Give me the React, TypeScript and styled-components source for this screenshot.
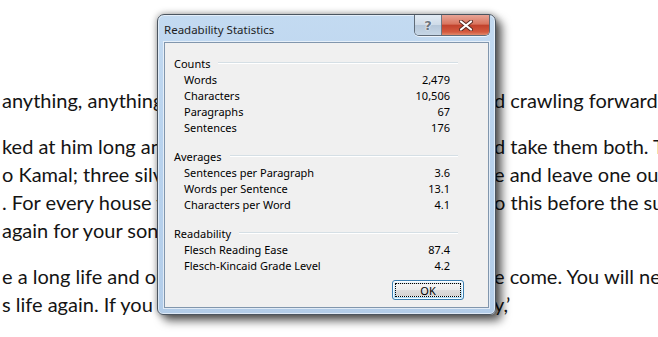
import styled, { createGlobalStyle } from 'styled-components';

const GlobalStyle = createGlobalStyle`
  html, body {
    margin: 0;
    padding: 0;
    background: #fff;
    overflow: hidden;
  }
`;

type DocLine = { left: string; right?: string };

const paragraphs: DocLine[][] = [
    [
        {left: 'anything, anything at all, he begged, and went on his knees an', right: 'd crawling forward'},
    ],
    [
        {left: 'ked at him long and hard, then said that he would take them both an', right: 'd take them both. Then'},
        {left: 'o Kamal; three silver coins for the old woman and her house, one for the stov', right: 'e and leave one out'},
        {left: '. For every house you burn, you will pay twice. Do it, and do it all, d', right: 'o this before the sun'},
        {left: 'again for your son.'},
    ],
    [
        {left: 'e a long life and one of plenty, for as long as the seasons turn and th', right: 'e come. You will never'},
        {left: 's life again. If you keep your promise, nothing bad will happen to you, the boy sa', right: 'y,\u2019'},
    ],
];

type Stat = { label: string; value: string };

const groups: { title: string; rows: Stat[] }[] = [
    {
        title: 'Counts',
        rows: [
            {label: 'Words', value: '2,479'},
            {label: 'Characters', value: '10,506'},
            {label: 'Paragraphs', value: '67'},
            {label: 'Sentences', value: '176'},
        ],
    },
    {
        title: 'Averages',
        rows: [
            {label: 'Sentences per Paragraph', value: '3.6'},
            {label: 'Words per Sentence', value: '13.1'},
            {label: 'Characters per Word', value: '4.1'},
        ],
    },
    {
        title: 'Readability',
        rows: [
            {label: 'Flesch Reading Ease', value: '87.4'},
            {label: 'Flesch-Kincaid Grade Level', value: '4.2'},
        ],
    },
];

const App = () => {
    return (
        <Page>
            <GlobalStyle/>
            <Document>
                {paragraphs.map((lines, i) => (
                    <Paragraph key={i}>
                        {lines.map((line, j) => (
                            <Line key={j}>
                                <LeftText>{line.left}</LeftText>
                                <RightText>{line.right}</RightText>
                            </Line>
                        ))}
                    </Paragraph>
                ))}
            </Document>

            <Dialog>
                <TitleBar>
                    <Title>Readability Statistics</Title>
                    <Caption>
                        <HelpButton>?</HelpButton>
                        <CloseButton>
                            <svg width="14" height="11" viewBox="0 0 14 11">
                                <path d="M2 1.5 L12 9.5 M12 1.5 L2 9.5" stroke="#5a2a22" strokeWidth="4"
                                      strokeLinecap="round"/>
                                <path d="M2 1.5 L12 9.5 M12 1.5 L2 9.5" stroke="#fff" strokeWidth="2.2"
                                      strokeLinecap="round"/>
                            </svg>
                        </CloseButton>
                    </Caption>
                </TitleBar>
                <Client>
                    {groups.map(group => (
                        <Group key={group.title}>
                            <GroupTitle>
                                <span>{group.title}</span>
                                <Rule/>
                            </GroupTitle>
                            {group.rows.map(row => (
                                <Row key={row.label}>
                                    <span>{row.label}</span>
                                    <Value>{row.value}</Value>
                                </Row>
                            ))}
                        </Group>
                    ))}
                    <Footer>
                        <OkButton><Focus>OK</Focus></OkButton>
                    </Footer>
                </Client>
            </Dialog>
        </Page>
    )
};

const Page = styled.div`
  position: relative;
  width: 658px;
  height: 337px;
  overflow: hidden;
  background: #fff;
`;

const Document = styled.div`
  padding-top: 86px;
  font-family: Lato, "Liberation Sans", sans-serif;
  font-size: 20px;
  color: #141414;
`;

const Paragraph = styled.div`
  margin-bottom: 18px;
`;

const Line = styled.div`
  display: grid;
  grid-template-columns: 494px 1fr;
  height: 28px;
  line-height: 28px;
  white-space: nowrap;
`;

const LeftText = styled.span`
  overflow: hidden;
  padding-left: 2px;
`;

const RightText = styled.span`
  overflow: hidden;
`;

const Dialog = styled.div`
  position: absolute;
  left: 157px;
  top: 14px;
  width: 339px;
  height: 301px;
  box-sizing: border-box;
  display: flex;
  flex-direction: column;
  border: 1px solid #4b5560;
  border-radius: 7px 7px 6px 6px;
  background: linear-gradient(to bottom, #c3daf1 0%, #b9d3ee 40%, #b3cde9 100%);
  box-shadow: inset 0 0 0 1px rgba(255, 255, 255, 0.55),
  6px 6px 10px rgba(0, 0, 0, 0.6),
  0 0 7px rgba(0, 0, 0, 0.4);
  font-family: "Noto Sans", "Open Sans", sans-serif;
  font-size: 11px;
  color: #000;
`;

const TitleBar = styled.div`
  display: flex;
  align-items: flex-start;
  justify-content: space-between;
  height: 28px;
  padding: 0 5px 0 6px;
`;

const Title = styled.div`
  padding-top: 7px;
  font-size: 11.5px;
  color: #1e1e1e;
`;

const Caption = styled.div`
  display: flex;
  height: 20px;
  border: 1px solid #5f6b78;
  border-top: none;
  border-radius: 0 0 5px 5px;
  overflow: hidden;
  box-shadow: 0 1px 0 rgba(255, 255, 255, 0.7);
`;

const HelpButton = styled.div`
  width: 26px;
  display: flex;
  align-items: center;
  justify-content: center;
  border-right: 1px solid #6d7884;
  background: linear-gradient(to bottom, #e2ebf4 0%, #cfdbe8 48%, #b6c7d9 52%, #c6d6e6 100%);
  font-family: "DejaVu Sans", sans-serif;
  font-size: 13px;
  font-weight: bold;
  color: #6c7580;
  text-shadow: 0 0 2px #fff, 0 0 1px #fff;
`;

const CloseButton = styled.div`
  width: 47px;
  display: flex;
  align-items: center;
  justify-content: center;
  background: linear-gradient(to bottom, #e8a597 0%, #d9755f 45%, #c2432d 52%, #d45a3f 85%, #e08a6c 100%);
`;

const Client = styled.div`
  flex: 1;
  margin: 0 6px 6px;
  padding: 12px 0 7px;
  border: 1px solid #8196ad;
  background: #f0f0f0;
  box-shadow: 0 0 0 1px rgba(255, 255, 255, 0.6);
  display: flex;
  flex-direction: column;
`;

const Group = styled.div`
  display: flex;
  flex-direction: column;
  margin-bottom: 13px;

  &:nth-last-child(2) {
    margin-bottom: 7px;
  }
`;

const GroupTitle = styled.div`
  display: flex;
  align-items: center;
  height: 16px;
  padding: 0 30px 0 9px;
  gap: 8px;
`;

const Rule = styled.div`
  flex: 1;
  height: 1px;
  background: #d5dfe5;
  border-bottom: 1px solid #fff;
`;

const Row = styled.div`
  display: flex;
  align-items: center;
  justify-content: space-between;
  height: 16px;
  padding: 0 38px 0 19px;
`;

const Value = styled.span`
  text-align: right;
`;

const Footer = styled.div`
  display: flex;
  justify-content: flex-end;
  padding-right: 24px;
`;

const OkButton = styled.div`
  width: 72px;
  height: 20px;
  box-sizing: border-box;
  padding: 2px;
  border: 1px solid #3c7fb1;
  border-radius: 3px;
  background: linear-gradient(to bottom, #eaf6fd 0%, #d9f0fc 45%, #bee6fd 50%, #a7d9f5 100%);
  box-shadow: inset 0 0 0 1px rgba(255, 255, 255, 0.8);
`;

const Focus = styled.div`
  height: 100%;
  box-sizing: border-box;
  display: flex;
  align-items: center;
  justify-content: center;
  border: 1px dotted #000;
  background: linear-gradient(to bottom, #f4f4f4 0%, #ececec 48%, #dddddd 52%, #d4d4d4 100%);
`;

export default App;
